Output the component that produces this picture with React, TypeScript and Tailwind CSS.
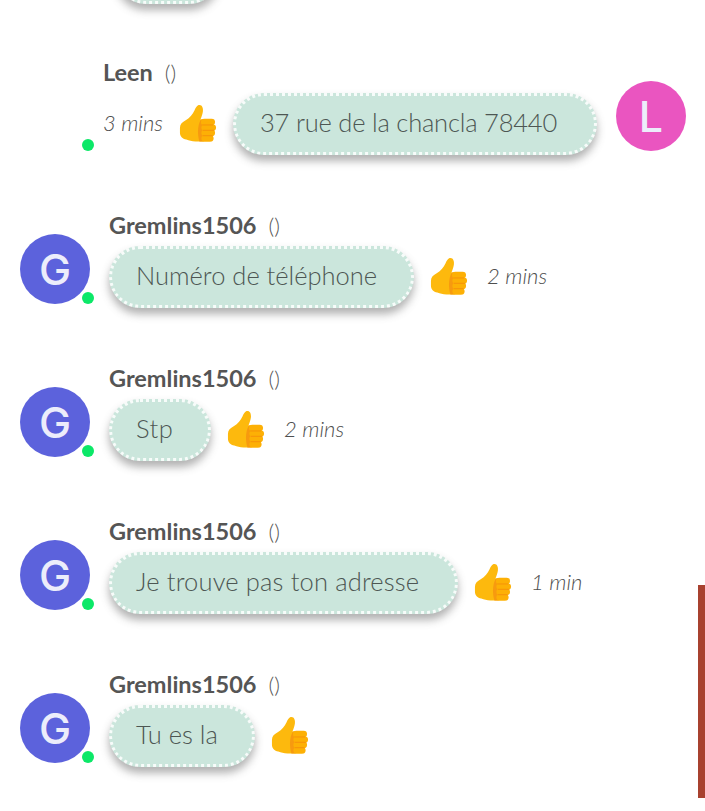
const ThumbIcon = () => (
  <svg viewBox="0 0 40 40" className="w-[39px] h-[40px] shrink-0">
    <path d="M2 24c0-3.500 2-5.500 5.500-7.500 4.500-2.500 7.500-6 9.500-10.500 1.200-2.800 2.500-5.500 5-5.500 3 0 4 3.500 3.500 7-.4 3-1.500 5.500-2.500 8h10.500V38H18c-4 0-6.500-1.200-9.500-2C4.500 35 2 33 2 29z" fill="#fdb90d" />
    <path d="M23.500 15.500c-2 3-3 8-3 12 0 4 .5 7.500 1.500 10.500h4V15.500z" fill="#f79a0f" />
    <rect x="23.500" y="14.500" width="14.500" height="7" rx="3.500" fill="#fdb005" />
    <rect x="24" y="20.500" width="15" height="6.500" rx="3.200" fill="#fdb005" />
    <rect x="24" y="26" width="14" height="6.500" rx="3.200" fill="#fdb005" />
    <rect x="24" y="31.500" width="12.500" height="6.500" rx="3.200" fill="#fdb005" />
    <path d="M25 21h11M25.500 26.500h11.500M25.500 32h10" stroke="#f58f0a" strokeWidth="0.9" fill="none" />
  </svg>
);

const Dot = ({ className }: { className: string }) => (
  <span className={`absolute w-[12px] h-[12px] rounded-full bg-[#0ce868] ${className}`} />
);

const Avatar = ({ letter, color }: { letter: string; color: string }) => (
  <div className={`w-[70px] h-[70px] rounded-full flex items-center justify-center shrink-0 text-[#ecedfb] text-[43px] font-['Inter',sans-serif] font-medium leading-none ${color}`}>
    {letter}
  </div>
);

const Bubble = ({ text, className }: { text: string; className: string }) => (
  <div className={`h-[62px] pl-[24px] pb-[3px] flex items-center rounded-[31px] bg-[#cbe6dc] border-[3px] border-dotted border-white/85 text-[#4d5653] text-[25.5px] font-light whitespace-nowrap shadow-[0_6px_9px_rgba(70,70,70,0.42)] ${className}`}>
    {text}
  </div>
);

const NameLine = ({ name }: { name: string }) => (
  <div className="h-[24px] flex items-center gap-[12px] text-[#555555] leading-none">
    <span className="text-[23.5px] font-bold">{name}</span>
    <span className="text-[22px] font-light">()</span>
  </div>
);

const TimeLabel = ({ text }: { text: string }) => (
  <span className="pb-[4px] text-[22px] italic font-light text-[#4f4f4f] whitespace-nowrap">{text}</span>
);

const messages = [
  { text: "Numéro de téléphone", time: "2 mins", className: "w-[305px]" },
  { text: "Stp", time: "2 mins", className: "w-[102px] tracking-[0.5px]" },
  { text: "Je trouve pas ton adresse", time: "1 min", className: "w-[349px] tracking-[0.16px]" },
  { text: "Tu es la", time: "", className: "w-[146px]" },
];

export default function App() {
  return (
    <div className="relative w-[705px] h-[811px] overflow-hidden bg-white font-['Lato',sans-serif]">
      {/* previous bubble, mostly scrolled away */}
      <div className="ml-[115px] w-[105px] h-[62px] -mt-[58px] mb-[57px] rounded-[31px] bg-[#cbe6dc] border-[3px] border-dotted border-white/85 shadow-[0_6px_9px_rgba(70,70,70,0.42)]" />

      <div className="flex justify-end pr-[19px] h-[153px]">
        <div className="relative mr-[19px]">
          <NameLine name="Leen" />
          <div className="flex items-center mt-[8px]">
            <TimeLabel text="3 mins" />
            <div className="ml-[15px] mr-[16px]"><ThumbIcon /></div>
            <Bubble text="37 rue de la chancla 78440" className="w-[364px] tracking-[-0.2px]" />
          </div>
          <Dot className="-left-[21px] top-[78px]" />
        </div>
        <div className="mt-[20px]"><Avatar letter="L" color="bg-[#ea55c0]" /></div>
      </div>

      {messages.map((m) => (
        <div key={m.text} className="flex pl-[20px] h-[153px]">
          <div className="relative mt-[20px] mr-[19px] self-start">
            <Avatar letter="G" color="bg-[#5c62dc]" />
            <Dot className="left-[62px] top-[58px]" />
          </div>
          <div>
            <NameLine name="Gremlins1506" />
            <div className="flex items-center mt-[8px]">
              <Bubble text={m.text} className={m.className} />
              <div className="ml-[15px] mr-[19px]"><ThumbIcon /></div>
              {m.time && <TimeLabel text={m.time} />}
            </div>
          </div>
        </div>
      ))}

      <div className="absolute left-[698px] top-[585px] w-[7px] h-[213px] bg-[#a8412f]" />
    </div>
  );
}
